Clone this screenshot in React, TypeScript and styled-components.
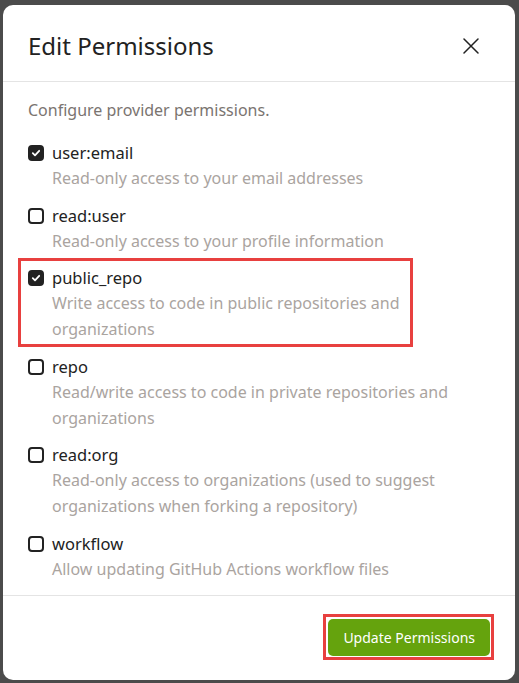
import React, { useState } from "react";
import styled, { createGlobalStyle } from "styled-components";

const permissions = [
  { id: "user:email", text: "Read-only access to your email addresses", checked: true },
  { id: "read:user", text: "Read-only access to your profile information", checked: false },
  {
    id: "public_repo",
    text: "Write access to code in public repositories and organizations",
    checked: true,
    highlight: true,
  },
  {
    id: "repo",
    text: "Read/write access to code in private repositories and organizations",
    checked: false,
  },
  {
    id: "read:org",
    text: "Read-only access to organizations (used to suggest organizations when forking a repository)",
    checked: false,
  },
  { id: "workflow", text: "Allow updating GitHub Actions workflow files", checked: false },
];

const GlobalStyle = createGlobalStyle`
  html, body {
    margin: 0;
    padding: 0;
    background: #4b4b4b;
  }
  body {
    font-family: "Noto Sans", "Open Sans", sans-serif;
  }
`;

const Backdrop = styled.div`
  min-height: 683px;
  box-sizing: border-box;
  padding: 5px 4px 3px 3px;
  background: #4b4b4b;
`;

const Modal = styled.div`
  background: #fff;
  border-radius: 10px;
  height: 675px;
  display: flex;
  flex-direction: column;
  overflow: hidden;
`;

const Header = styled.div`
  display: flex;
  align-items: center;
  justify-content: space-between;
  padding: 23px 36px 17px 25px;
  border-bottom: 1px solid #e4e4e4;
`;

const Title = styled.h2`
  margin: 0;
  font-size: 24px;
  line-height: 36px;
  font-weight: 400;
  color: #222;
`;

const CloseButton = styled.button`
  border: none;
  background: none;
  padding: 0;
  display: flex;
  color: #222;
  cursor: pointer;
`;

const Body = styled.div`
  flex: 1;
  padding: 16px 25px 0;
`;

const Intro = styled.p`
  margin: 0 0 19px;
  font-size: 16px;
  line-height: 24px;
  color: #7a7470;
`;

const List = styled.div`
  display: flex;
  flex-direction: column;
  gap: 12.5px;
`;

const Item = styled.label<{ $highlight?: boolean }>`
  position: relative;
  display: flex;
  gap: 8px;
  cursor: pointer;
  &::after {
    content: "";
    display: ${({ $highlight }) => ($highlight ? "block" : "none")};
    position: absolute;
    top: -8px;
    bottom: -5px;
    left: -10px;
    right: 77px;
    border: 3px solid #e8403f;
    pointer-events: none;
  }
`;

const Box = styled.span<{ $checked: boolean }>`
  flex: none;
  width: 16px;
  height: 16px;
  margin-top: 4px;
  box-sizing: border-box;
  border-radius: 4px;
  border: 2px solid #222;
  background: ${({ $checked }) => ($checked ? "#222" : "#fff")};
  display: flex;
  align-items: center;
  justify-content: center;
`;

const Texts = styled.div`
  display: flex;
  flex-direction: column;
`;

const Name = styled.span`
  font-size: 16.5px;
  line-height: 24px;
  color: #222;
`;

const Desc = styled.span`
  font-size: 16px;
  line-height: 26px;
  color: #aaa49f;
`;

const Footer = styled.div`
  display: flex;
  justify-content: flex-end;
  padding: 23px 25px 24px;
  border-top: 1px solid #e4e4e4;
`;

const PrimaryButton = styled.button`
  position: relative;
  height: 37px;
  padding: 0 15px;
  border: none;
  border-radius: 5px;
  background: #65a30d;
  color: #fff;
  font-family: "Noto Sans", "Open Sans", sans-serif;
  font-size: 14px;
  cursor: pointer;
  &::after {
    content: "";
    position: absolute;
    inset: -5px -4px -4px -5px;
    border: 3px solid #e8403f;
    pointer-events: none;
  }
`;

function CheckIcon() {
  return (
    <svg width="10" height="10" viewBox="0 0 10 10" fill="none">
      <path d="M1.8 5.2 L4 7.3 L8.2 2.8" stroke="#fff" strokeWidth="1.8" strokeLinecap="round" strokeLinejoin="round" />
    </svg>
  );
}

function CloseIcon() {
  return (
    <svg width="16" height="16" viewBox="0 0 16 16" fill="none">
      <path d="M1 1 L15 15 M15 1 L1 15" stroke="currentColor" strokeWidth="1.5" strokeLinecap="round" />
    </svg>
  );
}

export default function App() {
  const [checked, setChecked] = useState<Record<string, boolean>>(
    Object.fromEntries(permissions.map((p) => [p.id, p.checked]))
  );
  const toggle = (id: string) => setChecked((c) => ({ ...c, [id]: !c[id] }));

  return (
    <>
      <GlobalStyle />
      <Backdrop>
        <Modal>
          <Header>
            <Title>Edit Permissions</Title>
            <CloseButton aria-label="Close">
              <CloseIcon />
            </CloseButton>
          </Header>
          <Body>
            <Intro>Configure provider permissions.</Intro>
            <List>
              {permissions.map((p) => (
                <Item key={p.id} $highlight={p.highlight} onClick={() => toggle(p.id)}>
                  <Box $checked={checked[p.id]}>{checked[p.id] && <CheckIcon />}</Box>
                  <Texts>
                    <Name>{p.id}</Name>
                    <Desc>{p.text}</Desc>
                  </Texts>
                </Item>
              ))}
            </List>
          </Body>
          <Footer>
            <PrimaryButton>Update Permissions</PrimaryButton>
          </Footer>
        </Modal>
      </Backdrop>
    </>
  );
}
